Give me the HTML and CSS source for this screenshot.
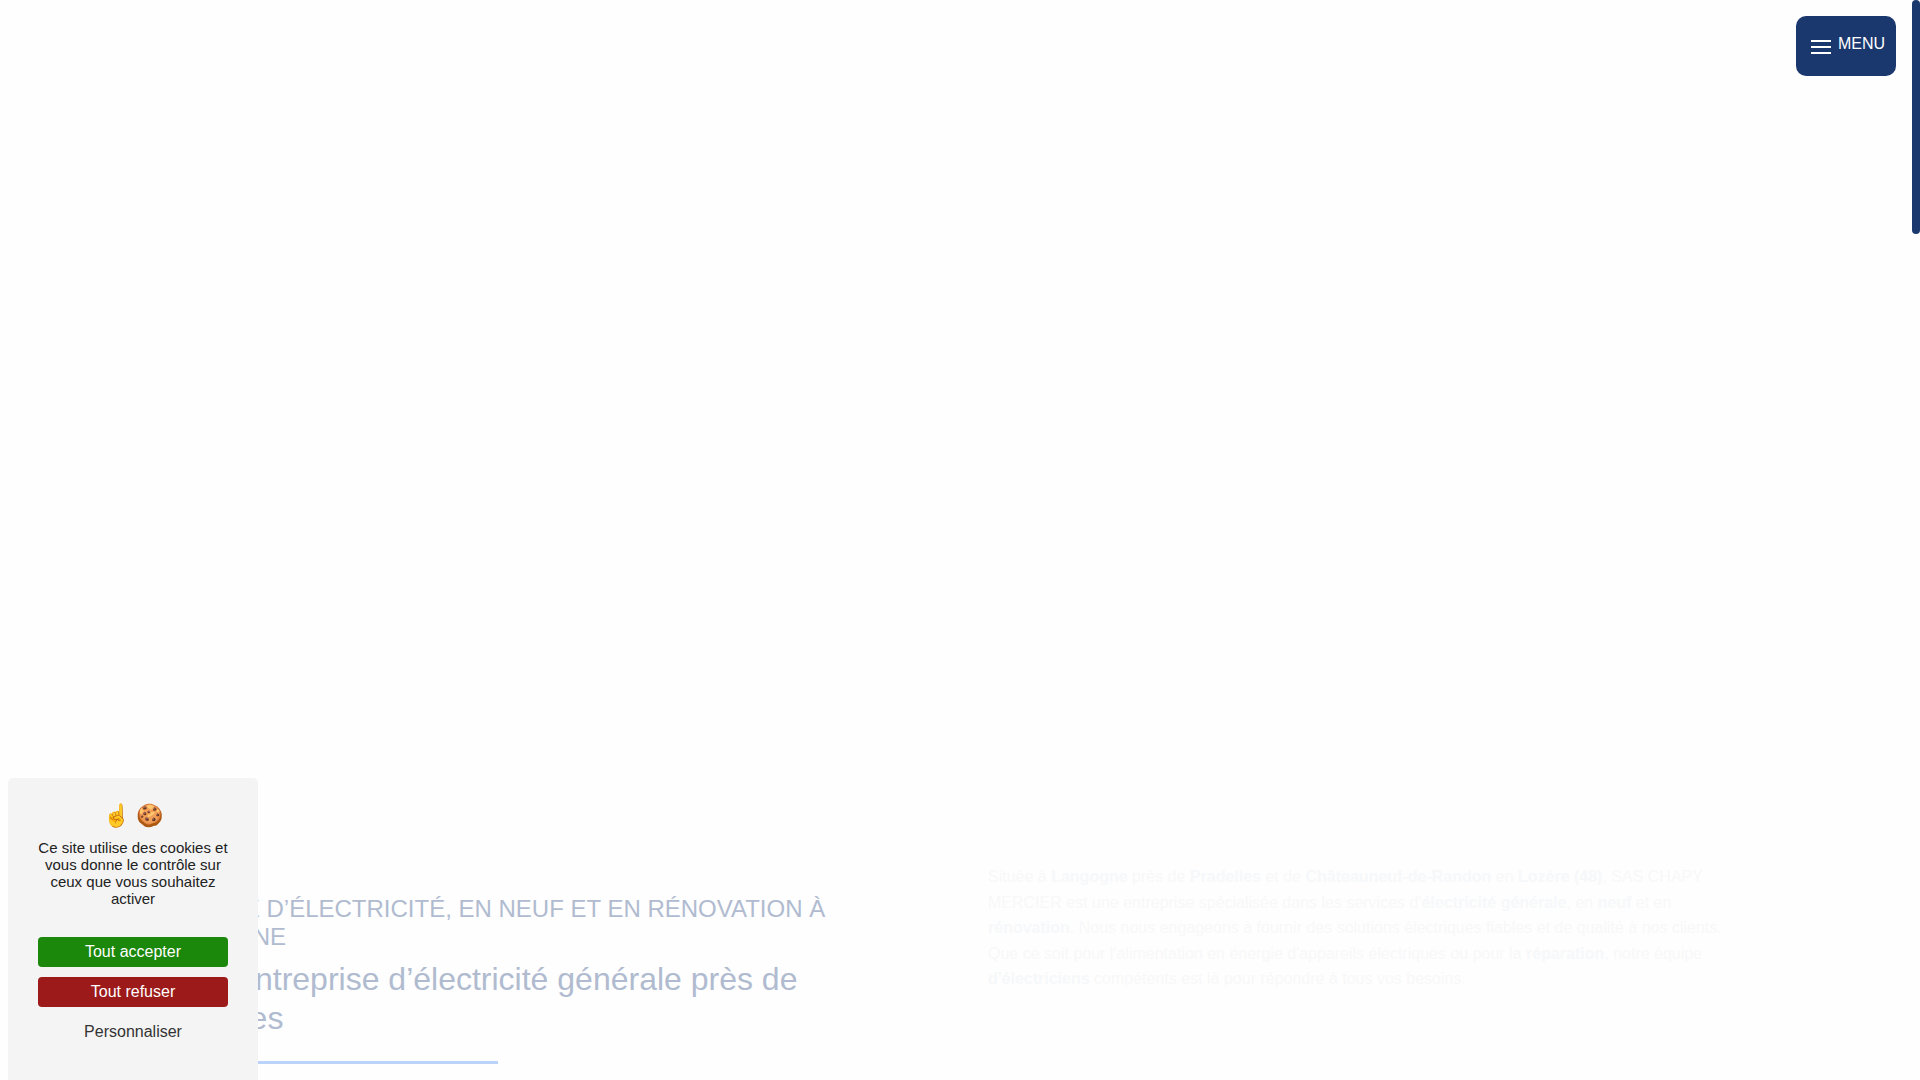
FILE: index.html
```html
<!DOCTYPE html>
<html lang="fr">
<head>
  <meta charset="UTF-8">
  <meta name="viewport" content="width=device-width, initial-scale=1.0">
  <title>Électricité générale à Langogne - SAS CHAPY MERCIER</title>
  <link rel="stylesheet" href="styles.css">
</head>
<body>

  <!-- Menu -->
  <button class="menu-button" type="button">
    <svg class="menu-icon" width="20" height="14" viewBox="0 0 20 14" aria-hidden="true">
      <path d="M0 1h20M0 7h20M0 13h20" stroke="#fff" stroke-width="2"/>
    </svg>
    <span>MENU</span>
  </button>

  <div class="scroll-thumb"></div>

  <main>
    <section class="hero"></section>

    <section class="intro">
      <div class="intro-title">
        <h1>TRAVAUX D’ÉLECTRICITÉ, EN NEUF ET EN RÉNOVATION À LANGOGNE</h1>
        <h2>Notre entreprise d’électricité générale près de Pradelles</h2>
        <hr>
      </div>
      <p class="intro-text">
        Située à <strong>Langogne</strong> près de <strong>Pradelles</strong> et de <strong>Châteauneuf-de-Randon</strong> en <strong>Lozère (48)</strong>, SAS CHAPY MERCIER est une entreprise spécialisée dans les services d'<strong>électricité générale</strong>, en <strong>neuf</strong> et en <strong>rénovation</strong>. Nous nous engageons à fournir des solutions électriques fiables et de qualité à nos clients. Que ce soit pour l'alimentation en énergie d'appareils électriques ou pour la <strong>réparation</strong>, notre équipe <strong>d'électriciens</strong> compétents est là pour répondre à tous vos besoins.
      </p>
    </section>
  </main>

  <!-- Cookies -->
  <div class="cookies" role="dialog" aria-label="Cookies">
    <div class="cookies-icons">☝️ 🍪</div>
    <p>Ce site utilise des cookies et vous donne le contrôle sur ceux que vous souhaitez activer</p>
    <button class="accept" type="button">Tout accepter</button>
    <button class="refuse" type="button">Tout refuser</button>
    <button class="customize" type="button">Personnaliser</button>
  </div>

</body>
</html>
```
FILE: styles.css
```css
* {
  box-sizing: border-box;
}

html {
  scrollbar-width: none;
}

body {
  margin: 0;
  background: #fefefe;
  font-family: "Liberation Sans", Arial, sans-serif;
  font-size: 16px;
}

.menu-button {
  position: fixed;
  top: 16px;
  right: 24px;
  width: 100px;
  height: 60px;
  padding: 0 10px 4px 15px;
  display: flex;
  align-items: center;
  gap: 7px;
  background: #1b386e;
  color: #fff;
  border: none;
  border-radius: 10px;
  font: inherit;
  cursor: pointer;
}

.menu-icon {
  margin-top: 6px;
}

.scroll-thumb {
  position: fixed;
  top: 0;
  right: 0;
  width: 8px;
  height: 234px;
  background: #1b386e;
  border-radius: 4px;
}

.hero {
  height: 80vh;
}

.intro {
  display: grid;
  grid-template-columns: 1fr 1fr;
  gap: 56px;
  padding: 0 150px 40px;
}

.intro-title {
  padding-top: 31px;
  color: #b0bbd0;
}

.intro h1 {
  margin: 0 0 9px;
  font-size: 24px;
  font-weight: normal;
  line-height: 28px;
}

.intro h2 {
  margin: 0;
  font-size: 32px;
  font-weight: normal;
  line-height: 39px;
}

.intro hr {
  width: 348px;
  height: 3px;
  margin: 23px 0 0;
  border: none;
  background: #bbd2fa;
}

.intro-text {
  margin: 0;
  padding-right: 30px;
  color: #f8f8f9;
  line-height: 1.6;
}

.intro-text strong {
  color: #f6f8fa;
}

.cookies {
  position: fixed;
  left: 8px;
  bottom: 0;
  width: 250px;
  padding: 22px 30px 23px;
  display: flex;
  flex-direction: column;
  background: #f4f4f4;
  border-radius: 5px 5px 0 0;
  color: #222;
  text-align: center;
}

.cookies-icons {
  font-size: 22px;
  line-height: 32px;
}

.cookies p {
  margin: 7px 0 30px;
  font-size: 15px;
  line-height: 17px;
}

.cookies button {
  height: 30px;
  margin-bottom: 10px;
  padding: 0;
  border: none;
  border-radius: 4px;
  color: #fff;
  font: inherit;
  cursor: pointer;
}

.cookies .accept {
  background: #1b870b;
}

.cookies .refuse {
  background: #9c1a1a;
}

.cookies .customize {
  background: none;
  color: #333;
}
```
